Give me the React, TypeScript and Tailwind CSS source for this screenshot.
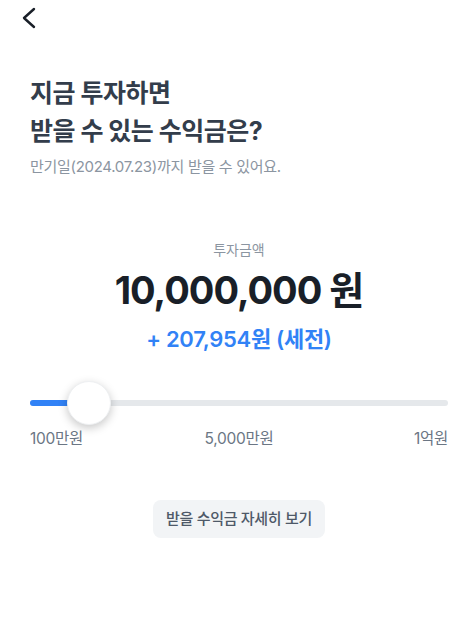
import React from "react";

export default function App() {
  const font = { fontFamily: 'Inter, "Noto Sans CJK KR", "Noto Sans", sans-serif' };
  return (
    <div className="w-[466px] h-[622px] bg-white flex flex-col" style={font}>
      <div className="h-[34px] flex items-center pl-[20px] pt-[2px]">
        <svg width="18" height="22" viewBox="0 0 18 22" fill="none">
          <path d="M14 2 L4 11 L14 20" stroke="#191f28" strokeWidth="2.4" strokeLinecap="round" strokeLinejoin="round" />
        </svg>
      </div>
      <div className="pl-[30px] pr-[18px] flex flex-col">
        <div className="pt-[40px]">
          <h1 className="text-[25px] leading-[38px] font-bold text-[#333d4b] tracking-[-0.5px]">
            지금 투자하면
            <br />
            받을 수 있는 수익금은?
          </h1>
          <p className="mt-[6px] text-[15px] leading-[22px] text-[#8b95a1] tracking-[-0.3px]">
            만기일(2024.07.23)까지 받을 수 있어요.
          </p>
        </div>
        <div className="flex flex-col items-center pt-[62px]">
          <div className="text-[14px] leading-[20px] text-[#8b95a1]">투자금액</div>
          <div className="mt-[6px] text-[38px] leading-[48px] font-bold text-[#191f28] tracking-[-1px]">
            10,000,000 원
          </div>
          <div className="mt-[10px] text-[22px] leading-[30px] font-semibold text-[#3182f6] tracking-[-0.3px]">
            + 207,954원 (세전)
          </div>
        </div>
        <div className="pt-[27px]">
          <div className="relative h-[44px] flex items-center">
            <div className="w-full h-[6px] rounded-full bg-[#e5e8eb]">
              <div className="h-full w-[50px] rounded-full bg-[#3182f6]" />
            </div>
            <div className="absolute left-[37px] top-0 w-[44px] h-[44px] rounded-full bg-white shadow-[0_3px_10px_rgba(0,0,0,0.22)] border border-[#eef0f2]" />
          </div>
          <div className="mt-[3px] grid grid-cols-3 text-[15.5px] leading-[22px] text-[#6b7684] tracking-[-0.3px]">
            <span className="text-left">100만원</span>
            <span className="text-center">5,000만원</span>
            <span className="text-right">1억원</span>
          </div>
        </div>
        <div className="flex justify-center pt-[50px]">
          <button className="h-[38px] px-[13px] rounded-[8px] bg-[#f2f4f6] text-[15px] font-medium text-[#4e5968] tracking-[-0.3px]">
            받을 수익금 자세히 보기
          </button>
        </div>
      </div>
    </div>
  );
}
